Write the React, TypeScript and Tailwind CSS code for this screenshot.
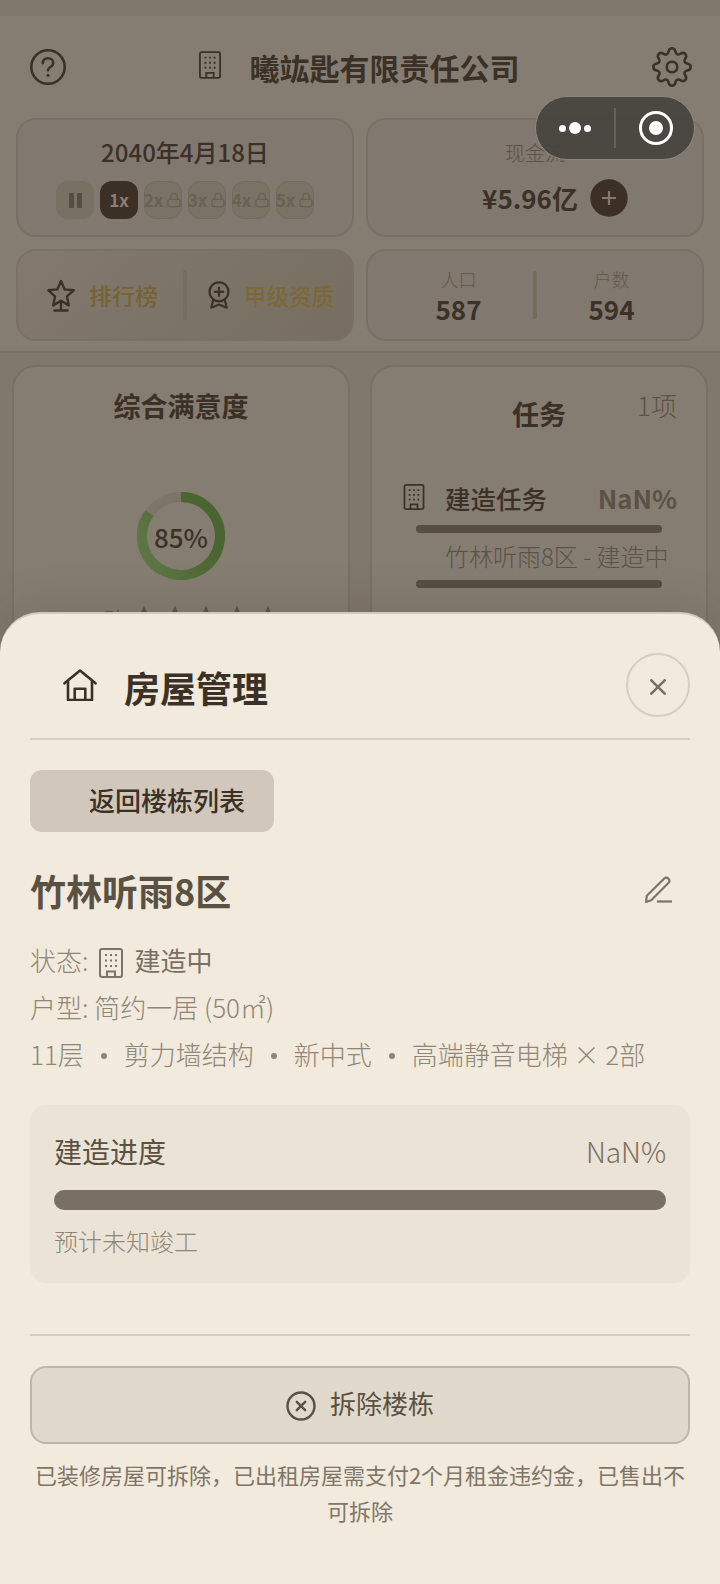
import type { ReactNode } from "react";
import clsx from "clsx";
import { Lock } from "lucide-react";

const speeds = ["2x", "3x", "4x", "5x"];

const specs = ["11层", "剪力墙结构", "新中式", "高端静音电梯 × 2部"];

function BuildingIcon({ className }: { className?: string }) {
  return (
    <svg viewBox="0 0 24 30" fill="none" stroke="currentColor" strokeWidth="2" className={className}>
      <rect x="1" y="1" width="22" height="28" rx="2" />
      <path d="M8 29v-5.500h8V29" />
      <path d="M6 7h2M11 7h2M16 7h2M6 12.500h2M11 12.500h2M16 12.500h2M6 18h2M11 18h2M16 18h2" />
    </svg>
  );
}

function HelpIcon() {
  return (
    <svg viewBox="0 0 36 36" fill="none" stroke="currentColor" strokeLinecap="round" className="size-9">
      <circle cx="18" cy="18" r="16.700" strokeWidth="2.600" />
      <path d="M12.800 14.200c0-3 2.300-5 5.200-5s5.200 2 5.200 4.700c0 4-5.200 4-5.200 7.300" strokeWidth="2.600" />
      <circle cx="18" cy="26.300" r="1.500" fill="currentColor" stroke="none" />
    </svg>
  );
}

function GearIcon() {
  return (
    <svg viewBox="0 0 40 40" fill="none" stroke="currentColor" strokeWidth="2.600" strokeLinejoin="round" className="size-10">
      <path d="M16.500 4.800C17 2.300 18.300 1.300 20 1.300s3 1 3.500 3.500c.5 2.600 2.600 3.500 4.800 2 2.100-1.400 3.700-1.200 4.900 0s1.400 2.800 0 4.900c-1.500 2.200-.6 4.300 2 4.800 2.500.5 3.500 1.800 3.500 3.500s-1 3-3.500 3.500c-2.600.5-3.500 2.600-2 4.800 1.400 2.100 1.200 3.700 0 4.900s-2.800 1.400-4.900 0c-2.200-1.500-4.300-.6-4.800 2-.5 2.500-1.800 3.500-3.500 3.500s-3-1-3.500-3.500c-.5-2.600-2.600-3.500-4.800-2-2.100 1.400-3.700 1.200-4.900 0s-1.400-2.800 0-4.900c1.500-2.200.6-4.300-2-4.800-2.500-.5-3.500-1.800-3.500-3.500s1-3 3.500-3.500c2.600-.5 3.500-2.600 2-4.800-1.400-2.100-1.200-3.700 0-4.900s2.800-1.400 4.900 0c2.200 1.500 4.300.6 4.800-2z" />
      <circle cx="20" cy="20" r="5.300" />
    </svg>
  );
}

function TrophyIcon() {
  return (
    <svg viewBox="0 0 28 33" fill="none" stroke="currentColor" strokeWidth="2.400" strokeLinejoin="round" strokeLinecap="round" className="h-[33px] w-7">
      <path d="M14 2l3.700 8.400 8.900.9-6.600 6.100 1.800 9L14 21.800l-7.800 4.600 1.800-9-6.600-6.100 8.900-.9z" />
      <path d="M14 22v9.500M7.500 31.500h13" />
    </svg>
  );
}

function MedalIcon() {
  return (
    <svg viewBox="0 0 22 28" fill="none" stroke="currentColor" strokeWidth="2.200" strokeLinejoin="round" strokeLinecap="round" className="h-7 w-[22px]">
      <circle cx="11" cy="10.800" r="9.500" />
      <path d="M11 6.500v8.600M6.700 10.800h8.600" />
      <path d="M5.300 18.500l-2 8.200 7.700-3.200 7.700 3.200-2-8.200" />
    </svg>
  );
}

function HomeIcon() {
  return (
    <svg viewBox="0 0 34 32" fill="none" stroke="currentColor" strokeWidth="2.600" strokeLinejoin="round" strokeLinecap="round" className="h-8 w-[34px]">
      <path d="M1.500 14.300L17 1.500l15.500 12.800" />
      <path d="M5 12v19h24V12" />
      <path d="M11.700 31V19.800h10.600V31" />
    </svg>
  );
}

function PencilIcon() {
  return (
    <svg viewBox="0 0 28 28" fill="none" stroke="currentColor" strokeWidth="2.200" strokeLinejoin="round" strokeLinecap="round" className="size-7">
      <path d="M2 26l.8-6.200L20 2.700c1.300-1.200 3.200-1.200 4.400 0s1.200 3.100 0 4.300L7.200 24.200z" />
      <path d="M14 25.500h13" strokeLinecap="square" />
    </svg>
  );
}

function StarIcon() {
  return (
    <svg viewBox="0 0 22 22" fill="currentColor" className="size-[22px]">
      <path d="M11 .5l2.800 7 7.600.4-5.900 4.700 2 7.400L11 15.900l-6.500 4.100 2-7.400L.6 7.900l7.600-.4z" />
    </svg>
  );
}

function StatCard({ className, children }: { className?: string; children: ReactNode }) {
  return (
    <div className={clsx("rounded-[20px] border-2 border-[#797065] bg-[#81786f]", className)}>{children}</div>
  );
}

function Figure({ label, value }: { label: string; value: number }) {
  return (
    <div className="flex w-[149px] flex-col items-center">
      <span className="text-[18px] leading-[26px] font-light text-[#62584d]">{label}</span>
      <span className="mt-px text-[26px] leading-8 font-bold">{value}</span>
    </div>
  );
}

function TopBar() {
  return (
    <header className="mt-4 h-[337px] border-b-2 border-[#797065] bg-[#857d71] px-4">
      <div className="flex h-[102px] items-center justify-between pr-3 pl-3.5">
        <HelpIcon />
        <div className="flex items-center gap-[29px]">
          <BuildingIcon className="mb-1 h-7 w-[22px]" />
          <h1 className="text-[30px] leading-10 font-bold">曦竑匙有限责任公司</h1>
        </div>
        <GearIcon />
      </div>

      <div className="grid grid-cols-2 gap-3">
        <StatCard className="flex h-[119px] flex-col items-center">
          <div className="mt-4 text-[24px] leading-8 font-medium">2040年4月18日</div>
          <div className="mt-[13px] flex gap-1.5 text-[17px] leading-[38px] font-bold">
            <div className="flex size-[38px] items-center justify-center gap-[3px] rounded-xl bg-[#797064]">
              <span className="h-[15px] w-[5px] rounded-[1px] bg-[#564c41]" />
              <span className="h-[15px] w-[5px] rounded-[1px] bg-[#564c41]" />
            </div>
            <div className="size-[38px] rounded-xl bg-[#3b2f26] text-center text-[#8a8176]">1x</div>
            {speeds.map((speed) => (
              <div
                key={speed}
                className="flex size-[38px] items-center justify-center gap-[3px] rounded-xl border border-[#736a5e] bg-[#7b7266] text-[#696054]"
              >
                {speed}
                <Lock className="size-4 shrink-0" strokeWidth={2} />
              </div>
            ))}
          </div>
        </StatCard>

        <StatCard className="flex h-[119px] flex-col items-center">
          <div className="mt-[19px] text-[20px] leading-7 font-light text-[#5c5247]">现金流</div>
          <div className="mt-3 flex items-center gap-3 pl-10">
            <span className="text-[26px] leading-9 font-bold">¥5.96亿</span>
            <svg viewBox="0 0 38 38" className="size-[38px]">
              <circle cx="19" cy="19" r="18.700" fill="#3b2f26" />
              <path d="M19 12v14M12 19h14" stroke="#81786f" strokeWidth="2.200" />
            </svg>
          </div>
        </StatCard>

        <div className="flex h-[92px] items-center rounded-[20px] border-2 border-[#7a7165] bg-linear-135 from-[#83796f] to-[#776e61] pl-[29px] text-[23px] leading-8 font-medium">
          <TrophyIcon />
          <span className="ml-3.5 text-[#756333]">排行榜</span>
          <span className="ml-[25px] h-[50px] w-1 rounded-sm bg-[#766d61]" />
          <span className="ml-[21px]">
            <MedalIcon />
          </span>
          <span className="ml-3.5 text-[22.500px] text-[#7b6935]">甲级资质</span>
        </div>

        <StatCard className="flex h-[92px] items-center justify-center">
          <Figure label="人口" value={587} />
          <span className="h-12 w-1 rounded-sm bg-[#746b5f]" />
          <Figure label="户数" value={594} />
        </StatCard>
      </div>
    </header>
  );
}

function Satisfaction() {
  return (
    <section className="flex h-[400px] w-[338px] flex-col items-center rounded-3xl border-2 border-[#797065] bg-[#857d71]">
      <h2 className="mt-[21px] text-[27px] leading-9 font-bold">综合满意度</h2>
      <div className="relative mt-[68px] size-[88px]">
        <svg viewBox="0 0 88 88" className="size-[88px]">
          <defs>
            <linearGradient id="ring" x1="1" y1="0" x2="0" y2="0.500">
              <stop offset="0.300" stopColor="#4a6530" />
              <stop offset="1" stopColor="#5d7444" />
            </linearGradient>
          </defs>
          <circle cx="44" cy="44" r="39" fill="none" stroke="#7d746a" strokeWidth="10" />
          <path d="M44 5A39 39 0 1 1 12.400 21.100" fill="none" stroke="url(#ring)" strokeWidth="10" />
        </svg>
        <span className="absolute inset-0 flex items-center justify-center text-[26px] font-medium">85%</span>
      </div>
      <div className="mt-[22px] flex items-start gap-[9px] text-[#5c5246]">
        <span className="mr-[-1px] text-[21px] leading-8 font-light">口碑</span>
        {[1, 2, 3, 4, 5].map((n) => (
          <span key={n} className="mt-[3px]">
            <StarIcon />
          </span>
        ))}
      </div>
    </section>
  );
}

function Tasks() {
  return (
    <section className="h-[400px] w-[338px] rounded-3xl border-2 border-[#797065] bg-[#857d71] pr-[29px] pl-[31px]">
      <div className="flex items-start">
        <h2 className="mt-[29px] ml-[109px] text-[27px] leading-9 font-bold">任务</h2>
        <span className="mt-5 ml-auto text-[26px] leading-9 font-light text-[#5c5246]">1项</span>
      </div>
      <div className="mt-12 flex items-center">
        <BuildingIcon className="mb-0.5 h-[26px] w-[22px]" />
        <span className="ml-5 text-[25.500px] leading-9 font-medium">建造任务</span>
        <span className="ml-auto text-[26px] leading-9 font-semibold text-[#5b5145]">NaN%</span>
      </div>
      <div className="mt-[9px] mr-[15px] ml-[13px] h-2 rounded-full bg-[#574d42]" />
      <div className="mt-1 ml-[42px] text-[24px] leading-[38px] font-light whitespace-nowrap text-[#5c5246]">竹林听雨8区 - 建造中</div>
      <div className="mt-[5px] mr-[15px] ml-[13px] h-2 rounded-full bg-[#574d42]" />
    </section>
  );
}

function Capsule() {
  return (
    <div className="absolute top-24 left-[535px] flex h-16 w-40 items-center rounded-full border border-[#8e887e] bg-[#48443e]/95">
      <div className="flex w-[78px] items-center justify-center gap-[3px] text-white">
        <span className="size-[7px] rounded-full bg-white" />
        <span className="size-3 rounded-full bg-white" />
        <span className="size-[7px] rounded-full bg-white" />
      </div>
      <span className="h-10 w-0.5 bg-[#686158]" />
      <span className="ml-[23px] flex size-[34px] items-center justify-center rounded-full border-3 border-white">
        <span className="size-3.5 rounded-full bg-white" />
      </span>
    </div>
  );
}

function HouseSheet() {
  return (
    <div className="absolute inset-x-0 top-[612px] bottom-0 rounded-t-[40px] border-t-2 border-[#d2c9bb] bg-[#f1eadd] px-[30px] shadow-[0_-8px_40px_rgba(60,48,38,0.15)]">
      <div className="flex h-[126px] items-center border-b-2 border-[#d7cec0] pl-[33px]">
        <span className="mt-[17px]">
          <HomeIcon />
        </span>
        <h2 className="mt-[22px] ml-[27px] text-[36px] leading-[48px] font-bold">房屋管理</h2>
        <button type="button" aria-label="关闭" className="mt-[18px] ml-auto flex size-16 items-center justify-center rounded-full border-2 border-[#d7cec0] text-[#797063]">
          <svg viewBox="0 0 16 16" fill="none" stroke="currentColor" strokeWidth="2.600" strokeLinecap="round" className="mt-1 size-4">
            <path d="M1.300 1.300l13.400 13.400M14.700 1.300L1.300 14.700" />
          </svg>
        </button>
      </div>

      <button type="button" className="mt-[30px] block h-[62px] w-[244px] rounded-xl bg-[#d1c8bb] pb-0.5 pl-[30px] text-center text-[26px] leading-[60px] font-medium">
        返回楼栋列表
      </button>

      <div className="mt-8 flex h-[52px] items-center justify-between pr-[18px]">
        <h3 className="text-[36px] leading-[52px] font-bold text-[#5a5143]">竹林听雨8区</h3>
        <span className="text-[#7d7366]">
          <PencilIcon />
        </span>
      </div>

      <div className="mt-5 text-[26px] leading-[47px] font-light text-[#8f8676]">
        <div className="flex items-center">
          <span>状态:</span>
          <BuildingIcon className="mt-1.5 ml-2.5 h-[30px] w-6 text-[#7d7366]" />
          <span className="ml-3 font-normal text-[#797063]">建造中</span>
        </div>
        <div>户型: 简约一居 (50㎡)</div>
        <div className="flex whitespace-nowrap">
          {specs.map((spec, i) => (
            <span key={spec} className="flex items-center">
              {i > 0 && <span className="mt-1 mr-[17px] ml-[17px] size-1.5 rounded-full bg-[#8f8676]" />}
              {spec}
            </span>
          ))}
        </div>
      </div>

      <div className="mt-[28px] h-[178px] rounded-2xl bg-[#eae3d6] px-6">
        <div className="flex justify-between pt-[26px] text-[28px] leading-10 font-light">
          <span className="font-normal text-[#5a5143]">建造进度</span>
          <span className="text-[#797063]">NaN%</span>
        </div>
        <div className="mt-[19px] h-5 rounded-full bg-[#797063]" />
        <div className="mt-[13px] text-[24px] leading-9 font-light text-[#8f8676]">预计未知竣工</div>
      </div>

      <div className="mt-[51px] border-t-2 border-[#d7cec0] pt-[30px] text-center">
        <button type="button" className="flex h-[78px] w-full items-center justify-center rounded-[16px] border-2 border-[#bfb6a8] bg-[#e1d9cb] text-[26px] leading-9 text-[#5a5143]">
          <svg viewBox="0 0 30 30" fill="none" stroke="currentColor" strokeWidth="2.400" strokeLinecap="round" className="mr-3.5 mt-px size-[30px]">
            <circle cx="15" cy="15" r="13.500" />
            <path d="M10.800 10.800l8.400 8.400M19.200 10.800l-8.400 8.400" />
          </svg>
          <span className="mb-1">拆除楼栋</span>
        </button>
        <p className="mt-3 text-[22px] leading-9 text-[#7f7667]">
          已装修房屋可拆除，已出租房屋需支付2个月租金违约金，已售出不可拆除
        </p>
      </div>
    </div>
  );
}

export default function App() {
  return (
    <main className="relative flex h-[1584px] w-[720px] flex-col overflow-hidden bg-[#80776d] font-['Noto_Sans_CJK_SC',sans-serif] text-[#3b3127]">
      <TopBar />
      <div className="flex justify-between px-3 pt-3">
        <Satisfaction />
        <Tasks />
      </div>
      <Capsule />
      <HouseSheet />
    </main>
  );
}
